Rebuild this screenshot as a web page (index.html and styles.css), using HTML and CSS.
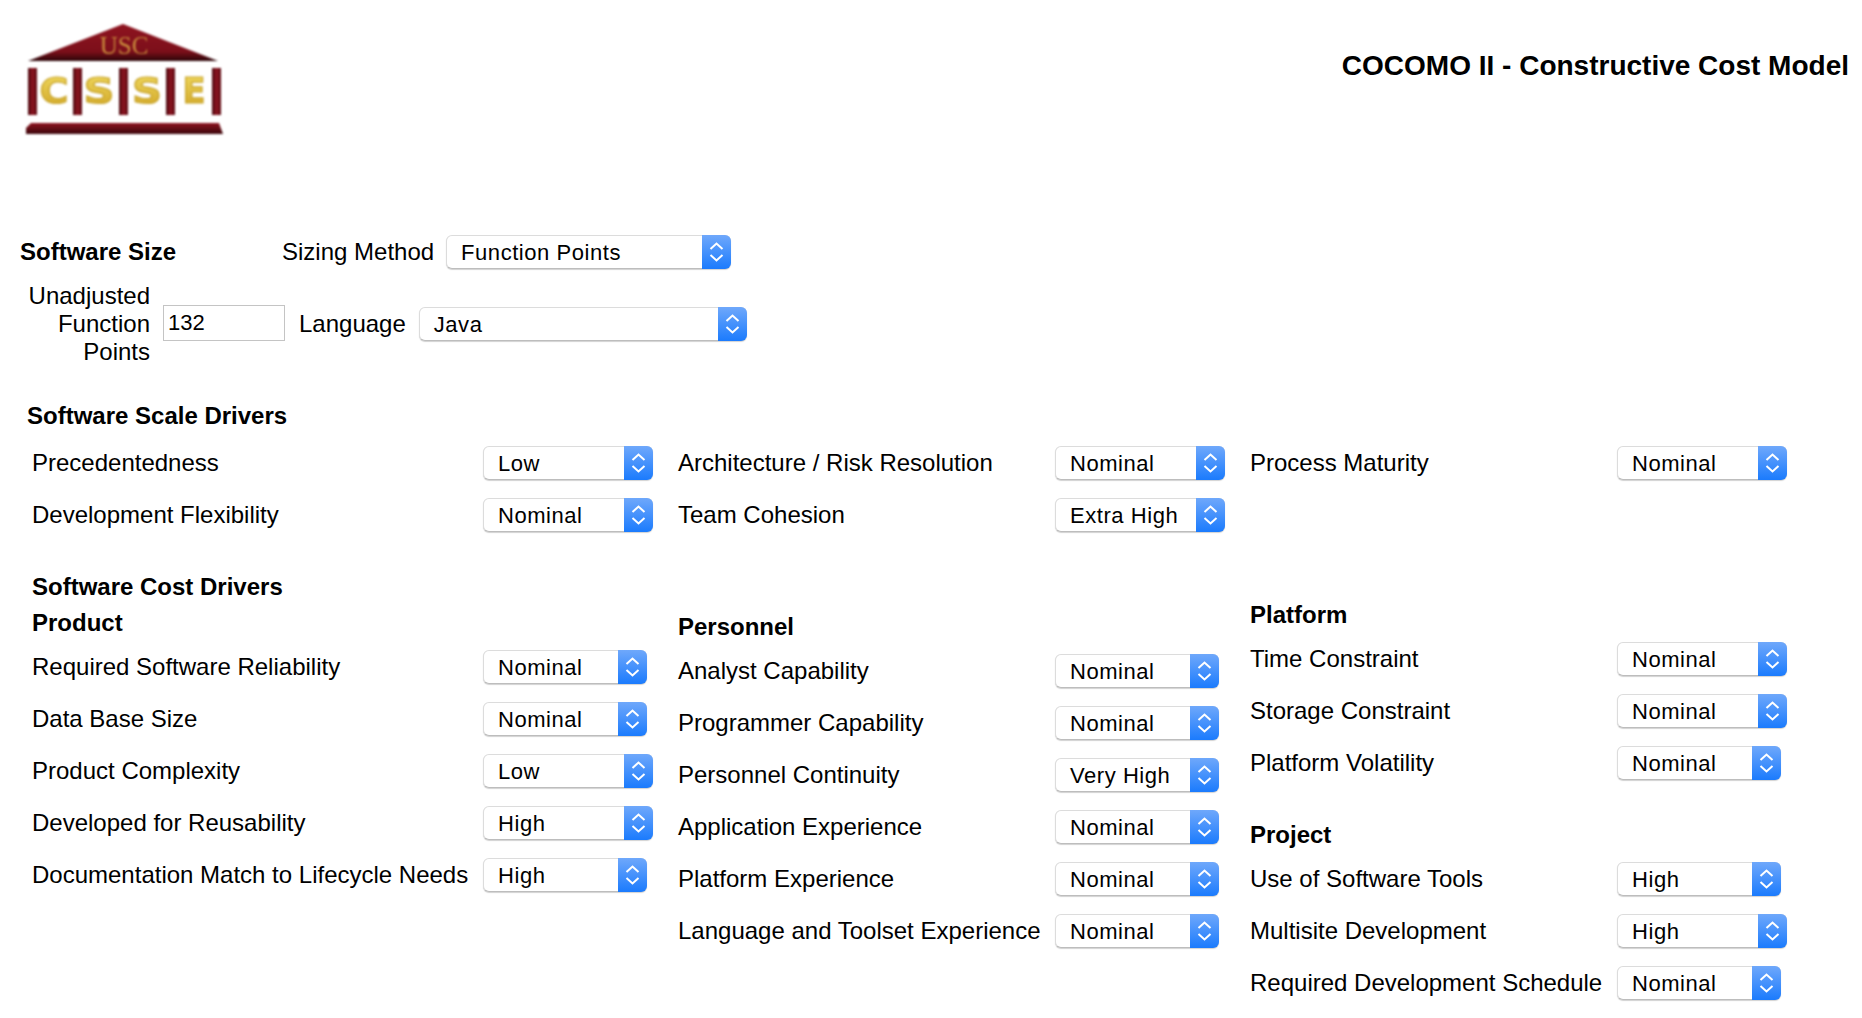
FILE: index.html
```html
<!DOCTYPE html>
<html lang="en">
<head>
<meta charset="utf-8">
<title>COCOMO II - Constructive Cost Model</title>
<link rel="stylesheet" href="styles.css">
</head>
<body>
<svg class="defs" width="0" height="0"><symbol id="chev" viewBox="0 0 15 22"><path d="M1.5 8 L7.5 2.5 L13.5 8 M1.5 14 L7.5 19.5 L13.5 14"/></symbol></svg>
<header class="page-header">
  <svg class="logo" width="240" height="140" viewBox="0 0 240 140" role="img" aria-label="USC CSSE">
    <defs>
      <linearGradient id="roof" x1="0" y1="0" x2="0" y2="1"><stop offset="0" stop-color="#8f1420"/><stop offset="0.75" stop-color="#7c0f1a"/><stop offset="1" stop-color="#2a0508"/></linearGradient>
      <linearGradient id="base" x1="0" y1="0" x2="0" y2="1"><stop offset="0" stop-color="#8f1420"/><stop offset="1" stop-color="#3a060b"/></linearGradient>
      <linearGradient id="col" x1="0" y1="0" x2="1" y2="0"><stop offset="0" stop-color="#4a0a10"/><stop offset="0.5" stop-color="#8c1420"/><stop offset="1" stop-color="#5a0b13"/></linearGradient>
      <linearGradient id="gold" x1="0" y1="0" x2="0" y2="1"><stop offset="0" stop-color="#f2dc62"/><stop offset="1" stop-color="#cfa426"/></linearGradient>
    </defs>
    <g class="logo-art">
      <polygon points="123,24 218,61 28,61" fill="url(#roof)"/>
      <text class="logo-usc" x="124" y="54" text-anchor="middle">USC</text>
      <rect x="28" y="68" width="9" height="47" fill="url(#col)"/>
      <rect x="73" y="68" width="9" height="47" fill="url(#col)"/>
      <rect x="119" y="68" width="9" height="47" fill="url(#col)"/>
      <rect x="166" y="68" width="9" height="47" fill="url(#col)"/>
      <rect x="212" y="68" width="9" height="47" fill="url(#col)"/>
      <text class="logo-letter" x="54" y="103" text-anchor="middle" textLength="29" lengthAdjust="spacingAndGlyphs">C</text>
      <text class="logo-letter" x="99" y="103" text-anchor="middle" textLength="31" lengthAdjust="spacingAndGlyphs">S</text>
      <text class="logo-letter" x="147" y="103" text-anchor="middle" textLength="30" lengthAdjust="spacingAndGlyphs">S</text>
      <text class="logo-letter" x="194" y="103" text-anchor="middle" textLength="23" lengthAdjust="spacingAndGlyphs">E</text>
      <polygon points="31,123 219,123 223,134 26,134 26,128" fill="url(#base)"/>
    </g>
  </svg>
  <h1 class="page-title">COCOMO II - Constructive Cost Model</h1>
</header>

<main>
  <section class="size">
    <div class="size-row">
      <h2 class="size-title">Software Size</h2>
      <span class="size-label">Sizing Method</span>
      <div class="select w-method"><span class="select-value">Function Points</span><span class="select-arrow"><svg width="15" height="22"><use href="#chev"/></svg></span></div>
    </div>
    <div class="size-row size-row-2">
      <div class="ufp-label">Unadjusted<br>Function<br>Points</div>
      <div class="ufp-input">132</div>
      <span class="lang-label">Language</span>
      <div class="select w-lang"><span class="select-value">Java</span><span class="select-arrow"><svg width="15" height="22"><use href="#chev"/></svg></span></div>
    </div>
  </section>

  <section class="scale">
    <h2 class="heading">Software Scale Drivers</h2>
    <div class="columns">
      <div class="col col-1">
        <div class="row"><span class="label">Precedentedness</span><div class="select"><span class="select-value">Low</span><span class="select-arrow"><svg width="15" height="22"><use href="#chev"/></svg></span></div></div>
        <div class="row"><span class="label">Development Flexibility</span><div class="select"><span class="select-value">Nominal</span><span class="select-arrow"><svg width="15" height="22"><use href="#chev"/></svg></span></div></div>
      </div>
      <div class="col col-2">
        <div class="row"><span class="label">Architecture / Risk Resolution</span><div class="select"><span class="select-value">Nominal</span><span class="select-arrow"><svg width="15" height="22"><use href="#chev"/></svg></span></div></div>
        <div class="row"><span class="label">Team Cohesion</span><div class="select"><span class="select-value">Extra High</span><span class="select-arrow"><svg width="15" height="22"><use href="#chev"/></svg></span></div></div>
      </div>
      <div class="col col-3">
        <div class="row"><span class="label">Process Maturity</span><div class="select"><span class="select-value">Nominal</span><span class="select-arrow"><svg width="15" height="22"><use href="#chev"/></svg></span></div></div>
      </div>
    </div>
  </section>

  <section class="cost columns">
    <div class="col col-1">
      <h2 class="heading heading-cost">Software Cost Drivers</h2>
      <h3 class="subheading">Product</h3>
      <div class="row"><span class="label">Required Software Reliability</span><div class="select narrow"><span class="select-value">Nominal</span><span class="select-arrow"><svg width="15" height="22"><use href="#chev"/></svg></span></div></div>
      <div class="row"><span class="label">Data Base Size</span><div class="select narrow"><span class="select-value">Nominal</span><span class="select-arrow"><svg width="15" height="22"><use href="#chev"/></svg></span></div></div>
      <div class="row"><span class="label">Product Complexity</span><div class="select"><span class="select-value">Low</span><span class="select-arrow"><svg width="15" height="22"><use href="#chev"/></svg></span></div></div>
      <div class="row"><span class="label">Developed for Reusability</span><div class="select"><span class="select-value">High</span><span class="select-arrow"><svg width="15" height="22"><use href="#chev"/></svg></span></div></div>
      <div class="row"><span class="label">Documentation Match to Lifecycle Needs</span><div class="select narrow"><span class="select-value">High</span><span class="select-arrow"><svg width="15" height="22"><use href="#chev"/></svg></span></div></div>
    </div>
    <div class="col col-2 personnel">
      <h3 class="subheading">Personnel</h3>
      <div class="row"><span class="label">Analyst Capability</span><div class="select narrow"><span class="select-value">Nominal</span><span class="select-arrow"><svg width="15" height="22"><use href="#chev"/></svg></span></div></div>
      <div class="row"><span class="label">Programmer Capability</span><div class="select narrow"><span class="select-value">Nominal</span><span class="select-arrow"><svg width="15" height="22"><use href="#chev"/></svg></span></div></div>
      <div class="row"><span class="label">Personnel Continuity</span><div class="select narrow"><span class="select-value">Very High</span><span class="select-arrow"><svg width="15" height="22"><use href="#chev"/></svg></span></div></div>
      <div class="row"><span class="label">Application Experience</span><div class="select narrow"><span class="select-value">Nominal</span><span class="select-arrow"><svg width="15" height="22"><use href="#chev"/></svg></span></div></div>
      <div class="row"><span class="label">Platform Experience</span><div class="select narrow"><span class="select-value">Nominal</span><span class="select-arrow"><svg width="15" height="22"><use href="#chev"/></svg></span></div></div>
      <div class="row"><span class="label">Language and Toolset Experience</span><div class="select narrow"><span class="select-value">Nominal</span><span class="select-arrow"><svg width="15" height="22"><use href="#chev"/></svg></span></div></div>
    </div>
    <div class="col col-3 platform">
      <h3 class="subheading">Platform</h3>
      <div class="row"><span class="label">Time Constraint</span><div class="select"><span class="select-value">Nominal</span><span class="select-arrow"><svg width="15" height="22"><use href="#chev"/></svg></span></div></div>
      <div class="row"><span class="label">Storage Constraint</span><div class="select"><span class="select-value">Nominal</span><span class="select-arrow"><svg width="15" height="22"><use href="#chev"/></svg></span></div></div>
      <div class="row"><span class="label">Platform Volatility</span><div class="select narrow"><span class="select-value">Nominal</span><span class="select-arrow"><svg width="15" height="22"><use href="#chev"/></svg></span></div></div>
      <h3 class="subheading project">Project</h3>
      <div class="row"><span class="label">Use of Software Tools</span><div class="select narrow"><span class="select-value">High</span><span class="select-arrow"><svg width="15" height="22"><use href="#chev"/></svg></span></div></div>
      <div class="row"><span class="label">Multisite Development</span><div class="select"><span class="select-value">High</span><span class="select-arrow"><svg width="15" height="22"><use href="#chev"/></svg></span></div></div>
      <div class="row"><span class="label">Required Development Schedule</span><div class="select narrow"><span class="select-value">Nominal</span><span class="select-arrow"><svg width="15" height="22"><use href="#chev"/></svg></span></div></div>
    </div>
  </section>
</main>
</body>
</html>
```

FILE: styles.css
```css
* { box-sizing: border-box; }
html, body { margin: 0; padding: 0; background: #fff; }
body {
  color: #000;
  font-family: "Liberation Sans", Arial, sans-serif;
  font-size: 24px;
  line-height: 28px;
  height: 1018px;
  overflow: hidden;
}
h1, h2, h3 { margin: 0; font-size: 24px; font-weight: 700; line-height: 28px; }
.defs { display: block; height: 0; }

.page-header { height: 235px; display: flex; justify-content: space-between; align-items: flex-start; }
.logo { display: block; flex: none; }
.logo-art { filter: blur(0.9px); }
.logo-usc { font-family: "Liberation Serif", serif; font-size: 25px; fill: #c98a3c; }
.logo-letter { font-family: "DejaVu Sans", sans-serif; font-weight: 700; font-size: 36px; fill: url(#gold); stroke: #c9a52a; stroke-width: 1.2px; }
.page-title { font-size: 28px; line-height: 32px; margin: 50px 13px 0 0; }

.size-row { display: flex; align-items: center; }
.size-title { width: 262px; margin-left: 20px; }
.size-label { margin-right: 12px; }
.size-row-2 { margin-top: 13px; }
.ufp-label { width: 150px; text-align: right; flex: none; }
.ufp-input {
  width: 122px; height: 36px; margin: 0 0 2px 13px; padding-left: 4px;
  border: 1px solid #c4c4c4; line-height: 34px; font-size: 22px;
}
.lang-label { margin: 0 13px 0 14px; }

.select {
  flex: none;
  width: 170px; height: 34px;
  display: flex; align-items: stretch; justify-content: space-between;
  background: #fff;
  border-radius: 6px;
  border: 1px solid #dcdcdc;
  border-bottom-color: #bdbdbd;
  box-shadow: 0 1px 1px rgba(0,0,0,.18);
  font-size: 22px; line-height: 33px; letter-spacing: .55px;
}
.select.narrow { width: 164px; }
.select.w-method { width: 285px; }
.select.w-lang { width: 328px; }
.select-value { padding-left: 14px; white-space: nowrap; }
.select-arrow {
  flex: none; width: 29px; margin: -1px -1px -1px 0;
  border-radius: 0 6px 6px 0;
  background: linear-gradient(#6fa8fb, #1b7bfd);
  display: flex; align-items: center; justify-content: center;
}
.select-arrow svg { display: block; fill: none; stroke: #fff; stroke-width: 2; }

.scale { margin-top: 36px; }
.heading { margin-left: 27px; }
.columns { display: flex; align-items: flex-start; }
.scale .columns { margin-top: 7px; }
.col-1 { margin-left: 32px; width: 646px; flex: none; }
.col-2 { width: 572px; flex: none; }
.col-3 { flex: none; }
.row { height: 52px; display: flex; align-items: center; }
.col-1 .label { width: 451px; }
.col-2 .label { width: 377px; }
.col-3 .label { width: 367px; }
.label { flex: none; white-space: nowrap; }

.cost { margin-top: 32px; }
.heading-cost { margin-left: 0; }
.subheading { margin-bottom: 4px; }
.col-1 .subheading { margin-top: 8px; margin-bottom: 4px; }
.personnel { padding-top: 40px; }
.platform { padding-top: 28px; }
.subheading.project { margin-top: 32px; margin-bottom: 4px; }
```
